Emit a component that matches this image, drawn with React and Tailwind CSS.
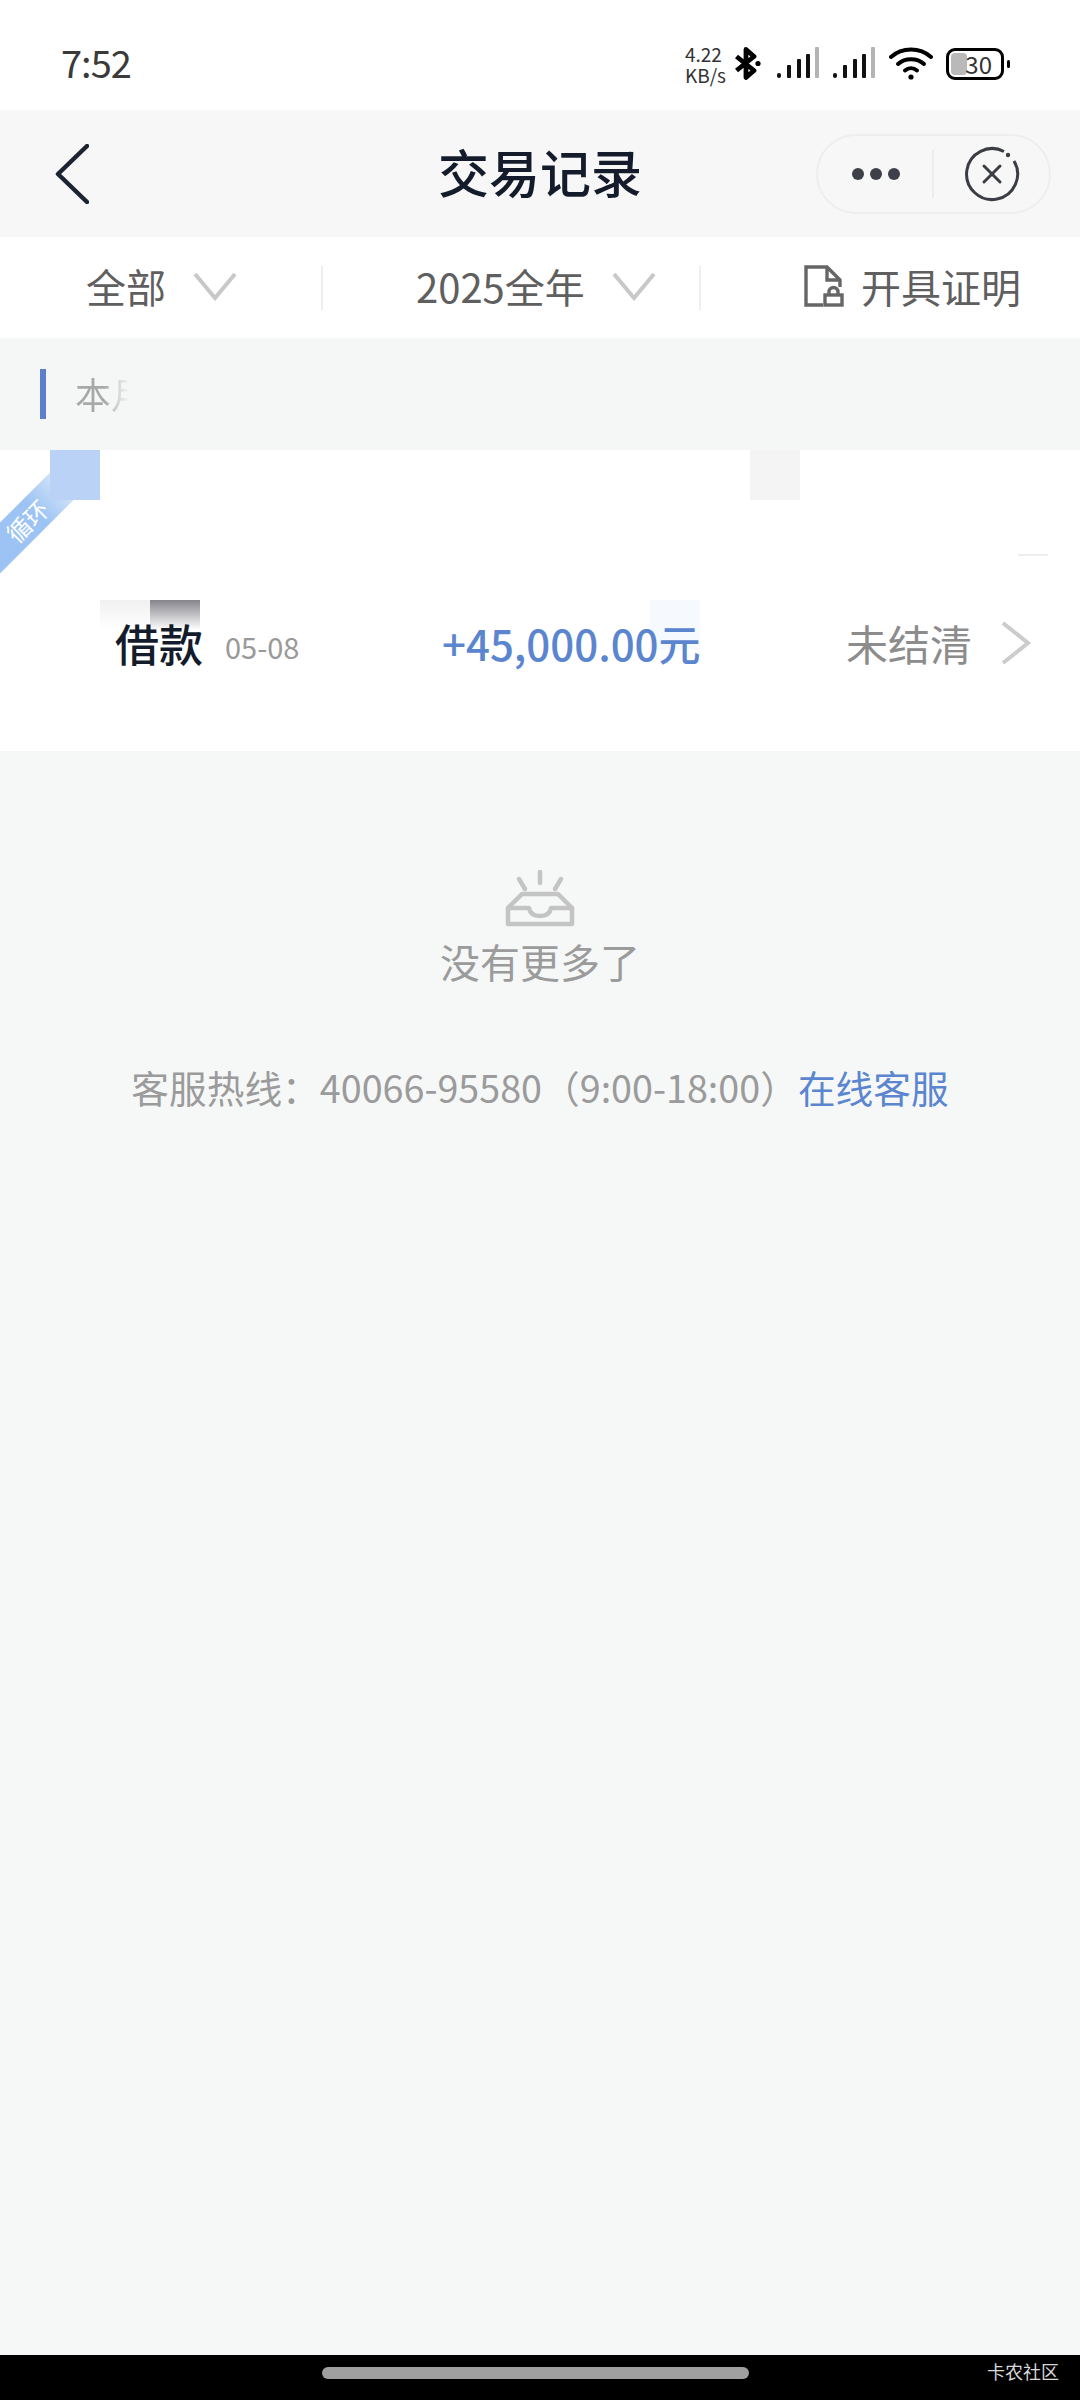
import React from 'react';

// Status bar icons
const Bluetooth = () => (
  <svg width="26" height="33" viewBox="0 0 26 33" fill="none">
    <path d="M1.5 9.5 L19 23.5 L11 30.5 V2.5 L19 9.5 L1.5 23.5" stroke="#000" strokeWidth="4.8" strokeLinejoin="round" />
    <circle cx="23" cy="16.5" r="2.6" fill="#000" />
  </svg>
);

const Signal = () => (
  <svg width="42" height="33" viewBox="0 0 42 33">
    <rect x="0" y="26" width="4" height="5" rx="2" fill="#111" />
    <rect x="10" y="18" width="4" height="13" rx="1" fill="#111" />
    <rect x="20" y="12" width="4" height="19" rx="1" fill="#111" />
    <rect x="29" y="7" width="4" height="24" rx="1" fill="#111" />
    <rect x="38" y="0" width="4" height="31" rx="1" fill="#b4b4b4" />
  </svg>
);

const Wifi = () => (
  <svg width="44" height="33" viewBox="0 0 44 33" fill="none" stroke="#000" strokeWidth="4" strokeLinecap="round">
    <path d="M2 10 C13 0 31 0 42 10" />
    <path d="M9 17 C16 10.5 28 10.5 35 17" />
    <path d="M16 23.5 C19.5 20.5 24.5 20.5 28 23.5" />
    <circle cx="22" cy="30" r="2.6" fill="#000" stroke="none" />
  </svg>
);

const Battery = () => (
  <div className="flex items-center">
    <div className="relative flex h-[32px] w-[58px] items-center justify-end rounded-[9px] border-[3px] border-black pr-[9px]">
      <div className="absolute bottom-[2px] left-[2px] top-[2px] w-[16px] rounded-[4px] bg-[#b9b9b9]" />
      <span className="relative text-[24px] leading-[26px] text-[#333]">30</span>
    </div>
    <div className="ml-[3px] h-[8px] w-[3px] rounded-full bg-black" />
  </div>
);

const Chevron = () => (
  <svg width="44" height="30" viewBox="0 0 44 30" fill="none">
    <path d="M2 3 L22 27 L42 3" stroke="#c8c8c8" strokeWidth="4" />
  </svg>
);

const DocLock = () => (
  <svg width="40" height="42" viewBox="0 0 40 42" fill="none" stroke="#666" strokeWidth="3.4">
    <path d="M19 40 H2 V2 H23 L36 15 V22" />
    <path d="M23 2 V15 H36" />
    <rect x="21" y="30" width="17" height="10" />
    <path d="M25 30 V27 A4.5 4.5 0 0 1 34 27 V30" />
  </svg>
);

const EmptyBox = () => (
  <svg width="70" height="58" viewBox="0 0 70 58" fill="none" stroke="#c4c4c4" strokeWidth="4.5" strokeLinecap="round" strokeLinejoin="round">
    <path d="M35 2 V13" />
    <path d="M14 9 L20 19" />
    <path d="M56 9 L50 19" />
    <path d="M17 24 H53 L67 38 V54 H3 V38 Z" />
    <path d="M3 38 H24 C25 44 29 46 35 46 C41 46 45 44 46 38 H67" />
  </svg>
);

export default function App() {
  return (
    <div className="flex h-[2400px] w-[1080px] flex-col overflow-hidden bg-[#f6f8f8] font-['Noto_Sans_CJK_SC',sans-serif]">
      {/* Status bar */}
      <div className="flex h-[110px] items-center justify-between bg-white pl-[61px] pr-[70px] pt-[14px]">
        <span className="text-[38px] leading-none tracking-[-1px] text-[#3a3a3a]">7:52</span>
        <div className="mt-[3px] flex items-center">
          <div className="mr-[9px] flex flex-col text-[19px] leading-[21px] text-[#333]">
            <span>4.22</span>
            <span>KB/s</span>
          </div>
          <Bluetooth />
          <div className="ml-[16px]"><Signal /></div>
          <div className="ml-[14px]"><Signal /></div>
          <div className="ml-[14px]"><Wifi /></div>
          <div className="ml-[13px]"><Battery /></div>
        </div>
      </div>

      {/* Nav bar */}
      <div className="relative flex h-[127px] items-center justify-between bg-[#f7f7f7] pl-[55px] pr-[29px]">
        <svg width="34" height="60" viewBox="0 0 34 60" fill="none">
          <path d="M32 2 L3 30 L32 58" stroke="#1c2434" strokeWidth="4.5" strokeLinecap="round" strokeLinejoin="round" />
        </svg>
        <h1 className="absolute left-[438px] pb-[5px] text-[51px] font-medium leading-none text-[#141c2c]">交易记录</h1>
        <div className="flex h-[80px] w-[235px] items-center rounded-full border-2 border-[#eeeeee] pl-[34px]">
          <div className="flex w-[48px] justify-between">
            <span className="h-[12px] w-[12px] rounded-full bg-[#3d4048]" />
            <span className="h-[12px] w-[12px] rounded-full bg-[#3d4048]" />
            <span className="h-[12px] w-[12px] rounded-full bg-[#3d4048]" />
          </div>
          <div className="ml-[32px] h-[48px] w-[2px] bg-[#ececec]" />
          <svg className="ml-[30px]" width="56" height="56" viewBox="0 0 56 56" fill="none" stroke="#3a3d44" strokeWidth="3">
            <path d="M40 5.5 A25.5 25.5 0 1 0 50 15" />
            <circle cx="44" cy="9" r="2.2" fill="#3a3d44" stroke="none" />
            <path d="M20 20 L36 36 M36 20 L20 36" strokeLinecap="round" />
          </svg>
        </div>
      </div>

      {/* Filter row */}
      <div className="flex h-[101px] items-center bg-white text-[40px] leading-none text-[#5f5f5f]">
        <div className="flex w-[321px] items-center pb-[4px] pl-[86px]">
          <span>全部</span>
          <div className="ml-[27px]"><Chevron /></div>
        </div>
        <div className="h-[44px] w-[2px] bg-[#eeeeee]" />
        <div className="flex w-[376px] items-center pb-[4px] pl-[93px]">
          <span>2025全年</span>
          <div className="ml-[27px]"><Chevron /></div>
        </div>
        <div className="h-[44px] w-[2px] bg-[#eeeeee]" />
        <div className="flex items-center pb-[4px] pl-[103px]">
          <DocLock />
          <span className="ml-[17px]">开具证明</span>
        </div>
      </div>

      {/* Section header */}
      <div className="flex h-[112px] items-center bg-[#f5f7f7] pl-[40px]">
        <div className="h-[50px] w-[6px] bg-[#5b7fcb]" />
        <span className="ml-[29px] bg-linear-to-r from-[#a8a8a8] from-40% to-transparent to-75% bg-clip-text pb-[3px] text-[36px] leading-none text-transparent">本月</span>
      </div>

      {/* Loan record card */}
      <div className="relative h-[301px] overflow-hidden bg-white">
        <div className="absolute left-[-50px] top-[50px] flex h-[36px] w-[160px] -rotate-45 items-center bg-linear-to-r from-[#9cc3f3] from-55% to-transparent pl-[52px] text-[24px] leading-none text-white">循环</div>
        <div className="absolute left-[50px] top-0 h-[50px] w-[50px] bg-[#b9d2f5]" />
        <div className="absolute left-[750px] top-0 h-[50px] w-[50px] bg-[#f4f4f4]" />
        <div className="absolute left-[100px] top-[150px] h-[30px] w-[50px] bg-linear-to-b from-[#f0f0f2] to-transparent" />
        <div className="absolute left-[150px] top-[150px] h-[30px] w-[50px] bg-linear-to-b from-[#85858c] to-transparent" />
        <div className="absolute left-[650px] top-[150px] h-[50px] w-[50px] bg-[#f6faff]" />
        <div className="absolute left-[1018px] top-[104px] h-[2px] w-[30px] bg-[#eeeeee]" />

        <div className="relative flex h-full items-center pl-[115px] pt-[85px]">
          <span className="text-[44px] font-medium leading-none text-[#141c2c]">借款</span>
          <span className="ml-[22px] mt-[6px] w-[217px] text-[29px] leading-none text-[#999999]">05-08</span>
          <span className="w-[404px] text-[42px] font-medium leading-none text-[#5b86cf]">+45,000.00元</span>
          <span className="text-[42px] leading-none text-[#8c8c8c]">未结清</span>
          <svg className="ml-[28px]" width="32" height="44" viewBox="0 0 32 44" fill="none">
            <path d="M3 2 L28 22 L3 42" stroke="#cccccc" strokeWidth="4" />
          </svg>
        </div>
      </div>

      {/* Empty state */}
      <div className="flex flex-1 flex-col items-center pt-[119px]">
        <EmptyBox />
        <span className="mt-[13px] text-[40px] leading-none text-[#9b9b9b]">没有更多了</span>
        <div className="mt-[87px] text-[37.7px] leading-none text-[#9b9b9b]">
          客服热线：40066-95580（9:00-18:00）<span className="text-[#5b86cf]">在线客服</span>
        </div>
      </div>

      {/* Gesture bar */}
      <div className="relative flex h-[45px] justify-center bg-black pr-[9px] pt-[12px]">
        <div className="h-[12px] w-[427px] rounded-full bg-[#a0a0a0]" />
        <span className="absolute left-[987px] top-[3px] text-[18px] leading-[26px] text-[#d8d8d8]">卡农社区</span>
      </div>
    </div>
  );
}
